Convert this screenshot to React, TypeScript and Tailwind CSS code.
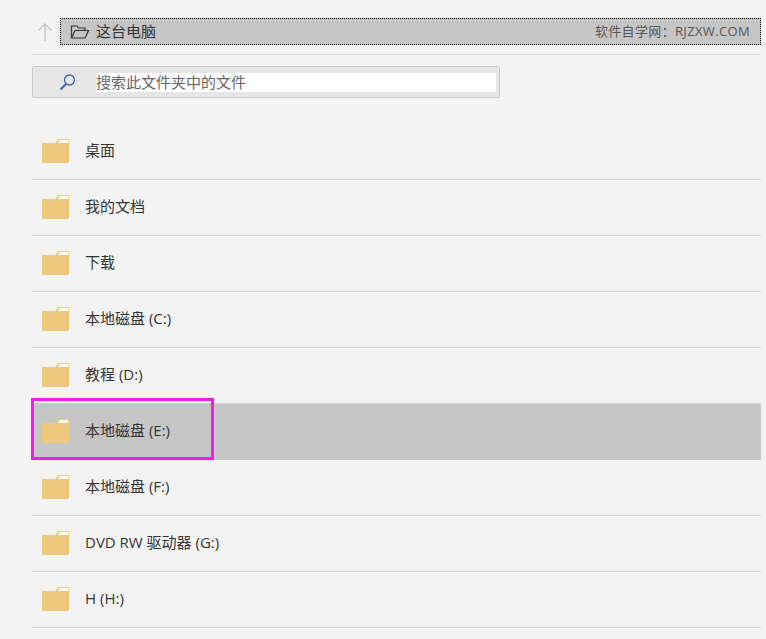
const FONT = "font-['Open_Sans','Noto_Sans_CJK_SC',sans-serif]";

const rows = [
  '桌面',
  '我的文档',
  '下载',
  '本地磁盘 (C:)',
  '教程 (D:)',
  '本地磁盘 (E:)',
  '本地磁盘 (F:)',
  'DVD RW 驱动器 (G:)',
  'H (H:)',
];

function FolderIcon() {
  return (
    <svg width="27" height="24" viewBox="0 0 27 24" className="shrink-0">
      <path d="M13 4 L16.5 0 H27 V5 H13 Z" fill="#efc87f" />
      <path d="M16 4 L18 1 H26 V4 Z" fill="#ffffff" />
      <rect x="0" y="4" width="27" height="20" fill="#efc87f" />
    </svg>
  );
}

function OpenFolderIcon() {
  return (
    <svg width="20" height="16" viewBox="0 0 20 16" fill="none" stroke="#333333" strokeWidth="1.2" className="shrink-0">
      <path d="M1.5 13.5 V2 H7 L8.5 4 H15 V6" />
      <path d="M1.5 14 H15 L18.5 6.5 H5 L1.5 14 Z" />
    </svg>
  );
}

export default function App() {
  return (
    <div className={`${FONT} h-[639px] w-[766px] overflow-hidden bg-[#f3f3f3] pt-[18px] pl-8 pr-[5px] text-[15px] text-[#333333]`}>
      <div className="flex h-[27px] items-center">
        <svg width="28" height="20" viewBox="0 0 28 20" fill="none" stroke="#c4c4c4" strokeWidth="1.3" className="shrink-0">
          <path d="M13 19 V2 M6.5 8.5 L13 2 L19.5 8.5" />
        </svg>
        <div className="flex h-[27px] flex-1 items-center justify-between border border-dotted border-black bg-[#c6c6c6] pr-[10px] pl-[9px]">
          <div className="flex items-center gap-[6px]">
            <OpenFolderIcon />
            <span>这台电脑</span>
          </div>
          <span className="text-[13px] tracking-[0.35px] text-[#555555]">软件自学网：RJZXW.COM</span>
        </div>
      </div>
      <div className="mt-[9px] h-px bg-[#dedede]" />
      <div className="mt-[11px] flex h-8 w-[468px] items-center rounded-[2px] border border-[#c9c9c9] bg-[#e6e6e6] pr-[3px]">
        <div className="flex w-[63px] shrink-0 justify-center pl-[6px]">
          <svg width="18" height="18" viewBox="0 0 18 18" fill="none" stroke="#3f66a8" className="shrink-0">
            <circle cx="10.5" cy="7" r="5" strokeWidth="1.3" />
            <path d="M7 11 L1.5 16.5" strokeWidth="2" />
          </svg>
        </div>
        <div className="flex h-[19px] flex-1 items-center bg-white text-[#666666]">搜索此文件夹中的文件</div>
      </div>
      <div className="mt-[26px]">
        {rows.map((label, i) => (
          <div
            key={label}
            className={`relative flex h-14 items-center gap-4 border-b pb-[2px] pl-[10px] ${i === 5 ? 'border-transparent bg-[#c6c6c6]' : 'border-[#d0d0d0]'}`}
          >
            <FolderIcon />
            <span>{label}</span>
            {i === 5 && (
              <div className="absolute top-[-6px] left-[-1px] h-[62px] w-[183px] border-[3px] border-[#f01ee8]" />
            )}
          </div>
        ))}
      </div>
    </div>
  );
}
